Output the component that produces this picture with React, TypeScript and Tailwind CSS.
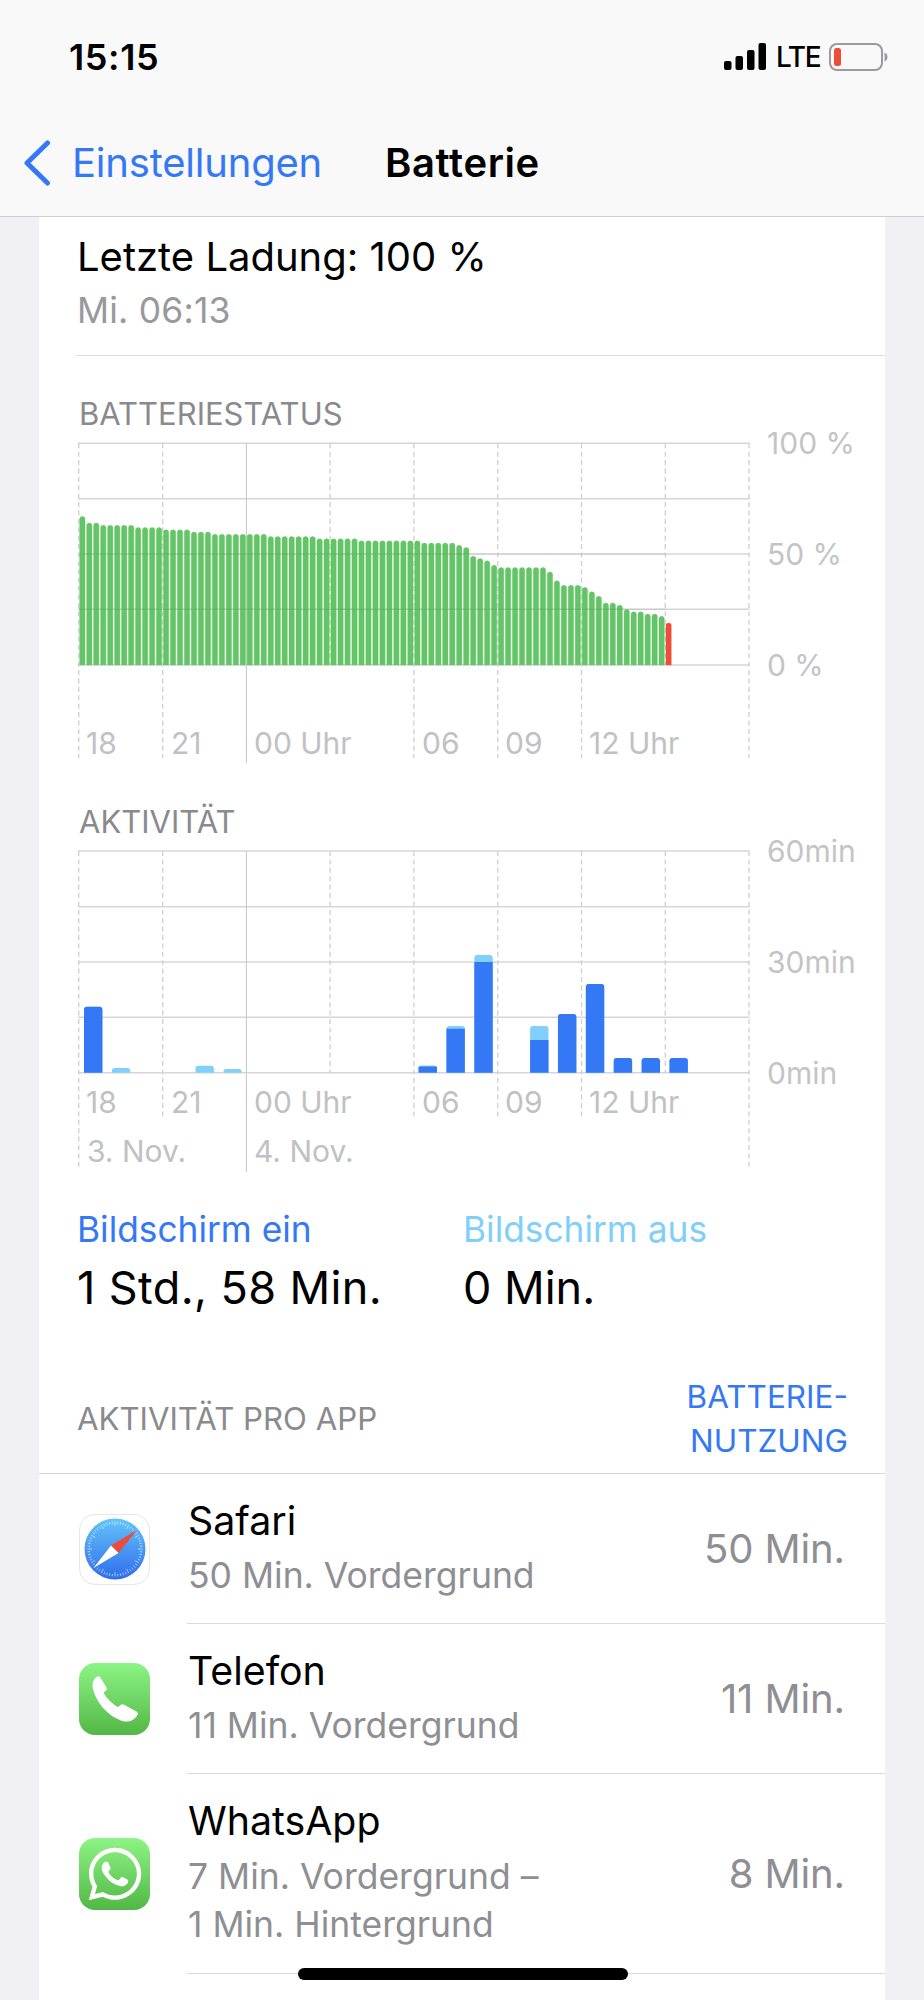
import React from "react";
import { FaWhatsapp } from "react-icons/fa";

const levels = [
  67, 64, 64, 63, 63, 63, 63, 63, 62, 62, 62, 62, 61, 61, 61, 61, 60, 60, 60,
  59, 59, 59, 59, 59, 59, 59, 59, 58, 58, 58, 58, 58, 58, 58, 57, 57, 57, 57,
  57, 57, 56, 56, 56, 56, 56, 56, 56, 56, 56, 55, 55, 55, 55, 55, 54, 53, 49,
  48, 47, 45, 44, 44, 44, 44, 44, 44, 44, 42, 38, 36, 36, 36, 35, 33, 31, 28,
  28, 27, 25, 24, 24, 23, 23, 22, 19,
];

const gridX = [78.7, 162.7, 246.4, 330.1, 413.9, 497.7, 581.5, 665.3, 749];

function topRounded(x: number, top: number, w: number, bottom: number, r: number) {
  return `M${x} ${bottom}V${top + r}Q${x} ${top} ${x + r} ${top}H${x + w - r}Q${x + w} ${top} ${x + w} ${top + r}V${bottom}Z`;
}

function Grid({ ys, stops }: { ys: number[]; stops: Record<number, number> }) {
  const axis = ys[ys.length - 1];
  return (
    <g>
      {ys.map((y) => (
        <line key={y} x1={78} x2={749.5} y1={y} y2={y} stroke="#d6d6d8" strokeWidth={1.4} />
      ))}
      {gridX.map((x, i) =>
        i === 2 ? (
          <line key={x} x1={x} x2={x} y1={ys[0]} y2={stops[i]} stroke="#c9c9cc" strokeWidth={1.1} />
        ) : (
          <line key={x} x1={x} x2={x} y1={ys[0]} y2={stops[i] ?? axis} stroke="#cfcfd2" strokeWidth={1.3} strokeDasharray="5 3.4" />
        ),
      )}
    </g>
  );
}

const tick = "fill-[#c1c1c4] text-[30px]";
const side = "fill-[#c4c4c7] text-[30px]";

function TimeLabels({ y }: { y: number }) {
  return (
    <g className={tick}>
      <text x={86} y={y}>18</text>
      <text x={171} y={y}>21</text>
      <text x={254} y={y}>00 Uhr</text>
      <text x={422} y={y}>06</text>
      <text x={505} y={y}>09</text>
      <text x={589} y={y}>12 Uhr</text>
    </g>
  );
}

function BatteryChart() {
  const ys = [443.3, 498.7, 554, 609.3, 665];
  return (
    <svg viewBox="39 432 846 338" className="block w-[846px] h-[338px] overflow-visible">
      <Grid ys={ys} stops={{ 0: 758, 1: 758, 2: 763, 4: 758, 5: 758, 6: 758, 8: 758 }} />
      {levels.map((l, i) => {
        const x = 79.6 + i * 6.98;
        const top = 665 - l * 2.217;
        const color = i === 84 ? "#ee4d3a" : "#63c566";
        return (
          <path
            key={i}
            d={topRounded(x, top, 5.4, 665, 2.5)}
            fill={color}
            stroke={color}
            strokeOpacity={0.3}
            strokeWidth={0.9}
          />
        );
      })}
      {[554, 609.3].map((y) => (
        <line key={y} x1={79} x2={666} y1={y} y2={y} stroke="#000" strokeOpacity={0.06} strokeWidth={1.4} />
      ))}
      <TimeLabels y={754} />
      <g className={side}>
        <text x={767} y={454}>100 %</text>
        <text x={767} y={565}>50 %</text>
        <text x={767} y={676}>0 %</text>
      </g>
    </svg>
  );
}

const activity: [number, number, number][] = [
  [0, 1006.7, 1006.7],
  [1, 1068, 1073],
  [4, 1065.7, 1073],
  [5, 1069, 1073],
  [12, 1065.5, 1066.5],
  [13, 1026, 1028.7],
  [14, 955, 962],
  [16, 1026, 1040],
  [17, 1014, 1014],
  [18, 984, 984],
  [19, 1058, 1058],
  [20, 1058, 1058],
  [21, 1058, 1058],
];

function ActivityChart() {
  const ys = [851, 906.7, 962, 1017.3, 1072.7];
  return (
    <svg viewBox="39 840 846 338" className="block w-[846px] h-[338px] overflow-visible">
      <Grid ys={ys} stops={{ 0: 1167, 1: 1117, 2: 1172, 4: 1117, 5: 1117, 6: 1117, 8: 1167 }} />
      {activity.map(([i, top, split]) => {
        const x = 84 + i * 27.88;
        return (
          <g key={i}>
            <path d={topRounded(x, top, 18.4, 1072.7, 3)} fill="#80d0fb" />
            {split < 1072 && (
              <path d={split === top ? topRounded(x, top, 18.4, 1072.7, 3) : `M${x} ${split}H${x + 18.4}V1072.7H${x}Z`} fill="#3478f6" />
            )}
          </g>
        );
      })}
      <TimeLabels y={1112.5} />
      <g className={tick}>
        <text x={87} y={1162}>3. Nov.</text>
        <text x={254} y={1162}>4. Nov.</text>
      </g>
      <g className={side}>
        <text x={767} y={862}>60min</text>
        <text x={767} y={973}>30min</text>
        <text x={767} y={1084}>0min</text>
      </g>
    </svg>
  );
}

function SafariIcon() {
  const ticks = Array.from({ length: 60 }, (_, i) => (i * Math.PI * 2) / 60);
  return (
    <div className="w-[71px] h-[71px] rounded-[16px] bg-white border border-[#e6e6e8] shrink-0 flex items-center justify-center">
      <svg viewBox="0 0 62 62" className="w-[62px] h-[62px]">
        <defs>
          <linearGradient id="safariBlue" x1="0" y1="0" x2="0" y2="1">
            <stop offset="0" stopColor="#63c4f9" />
            <stop offset="1" stopColor="#2f6cec" />
          </linearGradient>
        </defs>
        <circle cx="31" cy="31" r="30.5" fill="url(#safariBlue)" />
        {ticks.map((a, i) => (
          <line
            key={i}
            x1={31 + Math.cos(a) * 27.5}
            y1={31 + Math.sin(a) * 27.5}
            x2={31 + Math.cos(a) * (i % 5 === 0 ? 23 : 25)}
            y2={31 + Math.sin(a) * (i % 5 === 0 ? 23 : 25)}
            stroke="#fff"
            strokeOpacity={0.85}
            strokeWidth={0.7}
          />
        ))}
        <polygon points="53,12 34.5,35 27,27.5" fill="#ef4b3c" />
        <polygon points="9.5,50 34.5,35 27,27.5" fill="#fff" />
      </svg>
    </div>
  );
}

function GreenIcon({ children }: { children: React.ReactNode }) {
  return (
    <div className="w-[71px] h-[72px] rounded-[16px] bg-gradient-to-b from-[#8df585] to-[#52b744] shrink-0 flex items-center justify-center text-white">
      {children}
    </div>
  );
}

function PhoneGlyph() {
  return (
    <svg viewBox="0 0 46 46" className="w-[46px] h-[46px]" fill="#fff">
      <path d="M1 13C-.5 8 1 3 5 .7 6.5-.1 7.8.5 8.5 1.7L14.5 11.5C15.2 12.8 14.8 14 13.8 14.8L11.5 16.5C13.5 21 20 28 26 31L28.5 29C29.6 28 31 28 32.2 28.7L44.5 35.5C45.8 36.3 46.2 37.6 45.5 38.9 43 43.5 37.5 46 33 45.5 19 43 4.5 28 1 13Z" />
    </svg>
  );
}

function Row({
  icon,
  title,
  sub,
  value,
}: {
  icon: React.ReactNode;
  title: string;
  sub: string[];
  value: string;
}) {
  const tall = sub.length > 1;
  return (
    <div className="flex items-stretch">
      <div className="w-[148px] pl-[40px] flex items-center shrink-0">{icon}</div>
      <div className={tall ? "flex-1 flex items-center border-b border-[#d9d9db] pl-px pt-[22px] pb-[24px] pr-[40px]" : "flex-1 flex items-center border-b border-[#d9d9db] pl-px pt-[22px] pb-[23px] pr-[40px]"}>
        <div className="flex-1">
          <div className={tall ? "text-[39.3px] leading-[50px] text-black mb-[7px]" : "text-[39.3px] leading-[50px] text-black mb-[6px]"}>{title}</div>
          {sub.map((s) => (
            <div key={s} className="text-[35.5px] leading-[48px] text-[#8e8e93]">
              {s}
            </div>
          ))}
        </div>
        <div className="text-[40px] leading-[50px] tracking-[-0.1px] text-[#8e8e93] mt-[2px]">{value}</div>
      </div>
    </div>
  );
}

export default function App() {
  return (
    <div className="relative w-[924px] h-[2000px] overflow-hidden bg-[#f0f0f5] font-[Inter,'Liberation_Sans',sans-serif]">
      <header className="h-[217px] bg-[#f9f9f9] border-b border-[#cfcfd1]">
        <div className="h-[118px] flex items-center justify-between pl-[69px] pr-[36px] pb-[5px]">
          <span className="text-[36px] font-semibold tracking-[0.6px] text-black">15:15</span>
          <div className="flex items-center">
            <svg viewBox="0 0 42 27" className="w-[42px] h-[27px]">
              <rect x="0" y="18" width="7.5" height="9" rx="2" fill="#000" />
              <rect x="11.5" y="13" width="7.5" height="14" rx="2" fill="#000" />
              <rect x="23" y="7" width="7.5" height="20" rx="2" fill="#000" />
              <rect x="34.5" y="0" width="7.5" height="27" rx="2" fill="#000" />
            </svg>
            <span className="ml-[10px] mt-[1px] w-[44px] text-[28px] font-medium tracking-[-1.4px] leading-[27px] text-black">LTE</span>
            <svg viewBox="0 0 59 28" className="ml-[9px] w-[59px] h-[28px]">
              <rect x="1" y="1" width="52" height="26" rx="7" fill="none" stroke="#9b9b9f" strokeWidth="2" />
              <rect x="5" y="5" width="7" height="18" rx="2.5" fill="#ee4d3a" />
              <path d="M55.5 9.5c2 .6 3 2.4 3 4.5s-1 3.9-3 4.5z" fill="#9b9b9f" />
            </svg>
          </div>
        </div>
        <div className="relative h-[98px] flex items-start">
          <svg viewBox="0 0 28 46" className="absolute left-[23px] top-[22px] w-[28px] h-[46px]">
            <path d="M24.5 3 L4 23 L24.5 43" fill="none" stroke="#3478f6" strokeWidth="5" strokeLinecap="round" strokeLinejoin="round" />
          </svg>
          <span className="ml-[72px] mt-[20px] text-[40px] leading-[50px] tracking-[-0.2px] text-[#3478f6]">Einstellungen</span>
          <span className="ml-[63px] mt-[20px] text-[40px] leading-[50px] font-semibold tracking-[0.6px] text-black">Batterie</span>
        </div>
      </header>

      <main className="mx-[39px] w-[846px] h-[1783px] bg-white">
        <div className="pl-[38px] pt-[15px] pb-[22px]">
          <div className="text-[40px] leading-[50px] text-black mb-[7px]">Letzte Ladung: 100 %</div>
          <div className="text-[35.5px] leading-[44px] tracking-[0.2px] text-[#98989d]">Mi. 06:13</div>
        </div>
        <div className="ml-[37px] border-t border-[#dedee0]" />
        <div className="pl-[40px] pt-[40px] text-[31px] leading-[36px] text-[#8a8a8e]">BATTERIESTATUS</div>
        <BatteryChart />
        <div className="pl-[40px] pt-[34px] text-[31px] leading-[36px] text-[#8a8a8e]">AKTIVITÄT</div>
        <ActivityChart />

        <div className="flex pl-[38px] pt-[30px]">
          <div className="w-[386px]">
            <div className="text-[35.3px] leading-[44px] text-[#3478f6] mb-[8px]">Bildschirm ein</div>
            <div className="text-[45px] leading-[56px] tracking-[0.4px] text-black">1 Std., 58 Min.</div>
          </div>
          <div>
            <div className="text-[35.3px] leading-[44px] text-[#7fcffa] mb-[8px]">Bildschirm aus</div>
            <div className="text-[45px] leading-[56px] text-black">0 Min.</div>
          </div>
        </div>

        <div className="flex items-center justify-between pl-[38px] pr-[37px] h-[109px] mt-[49px] border-b border-[#d6d6d8]">
          <div className="text-[31.2px] leading-[44px] text-[#8a8a8e]">AKTIVITÄT PRO APP</div>
          <div className="text-[31.5px] leading-[44px] text-right text-[#3478f6]">
            BATTERIE-
            <br />
            NUTZUNG
          </div>
        </div>

        <Row icon={<SafariIcon />} title="Safari" sub={["50 Min. Vordergrund"]} value="50 Min." />
        <Row icon={<GreenIcon><PhoneGlyph /></GreenIcon>} title="Telefon" sub={["11 Min. Vordergrund"]} value="11 Min." />
        <Row
          icon={<GreenIcon><FaWhatsapp size={60} /></GreenIcon>}
          title="WhatsApp"
          sub={["7 Min. Vordergrund –", "1 Min. Hintergrund"]}
          value="8 Min."
        />
      </main>
      <div className="absolute left-[298px] top-[1968px] w-[330px] h-[12px] rounded-full bg-black" />
    </div>
  );
}
